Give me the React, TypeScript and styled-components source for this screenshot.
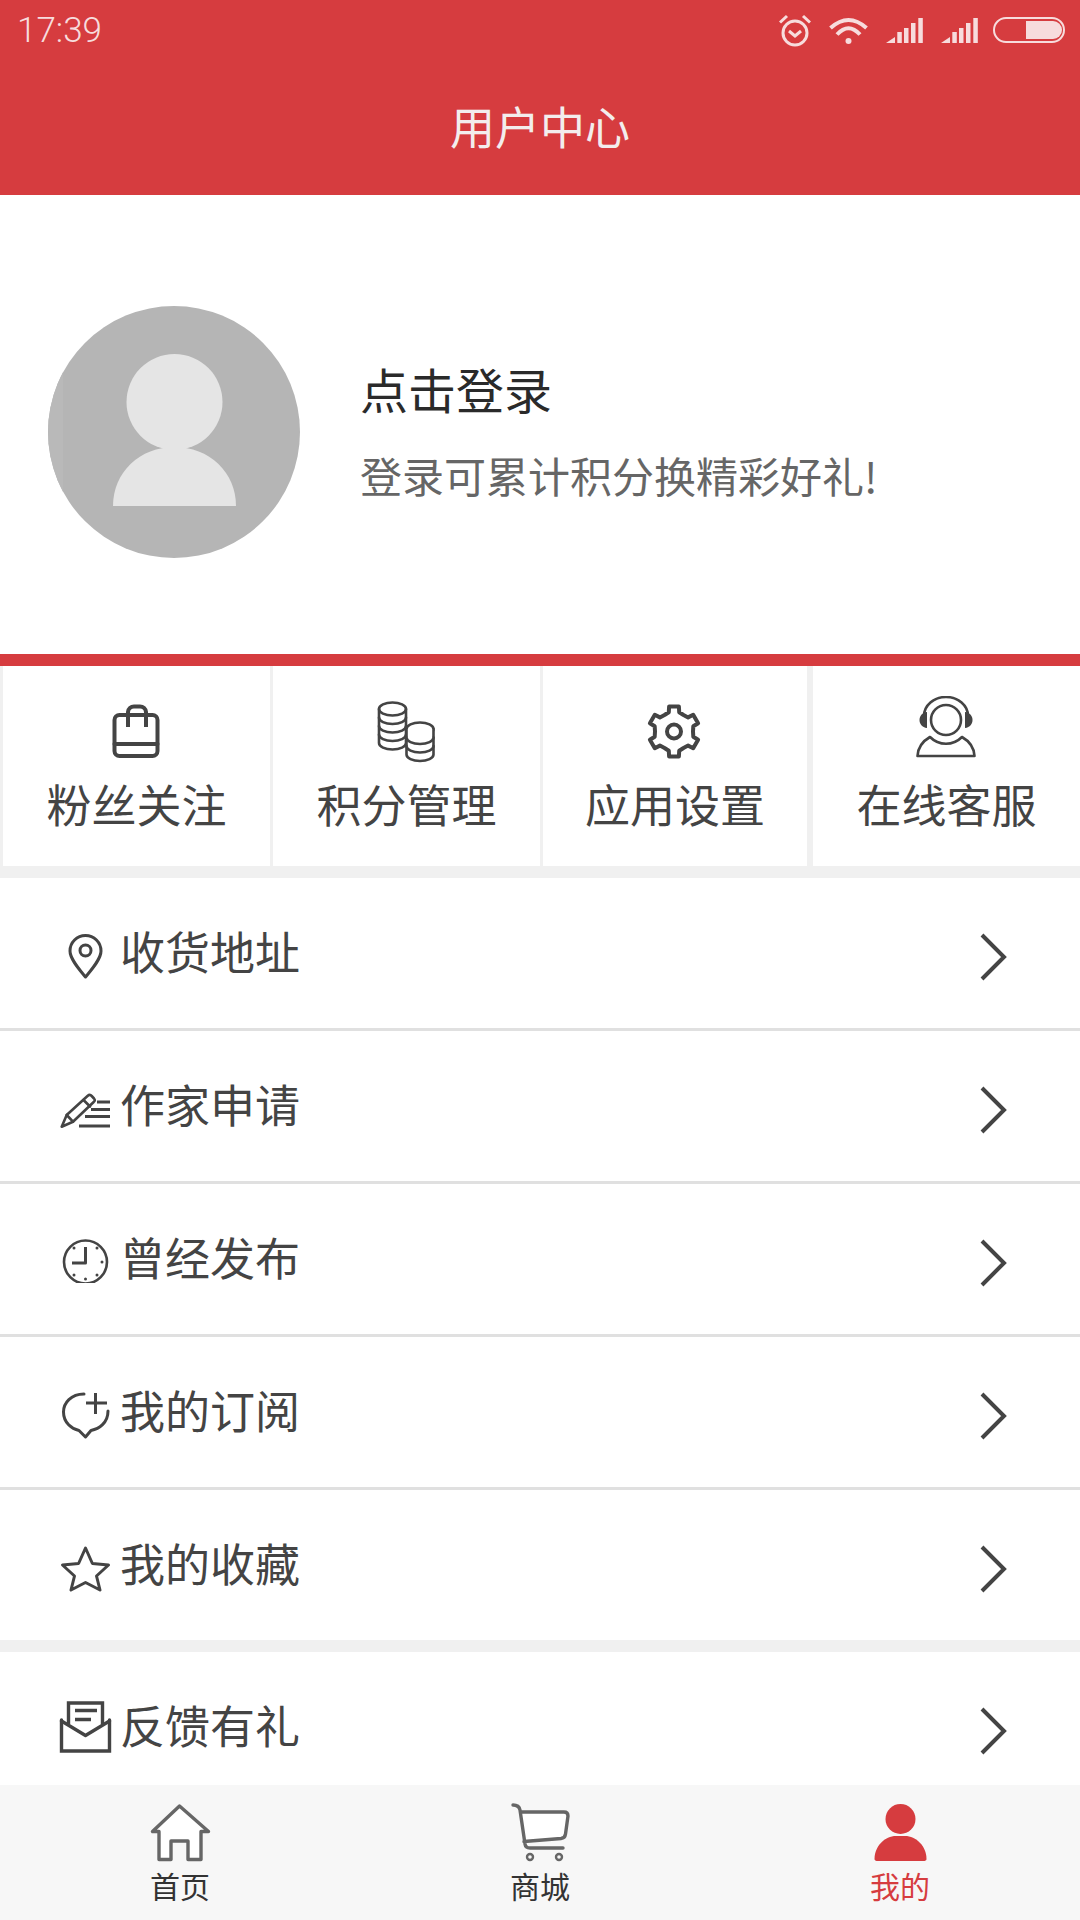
import React from "react";
import styled, { createGlobalStyle } from "styled-components";

const RED = "#d63c3f";
const INK = "#444444";
const STATUS = "#f7dcdd";

const GlobalStyle = createGlobalStyle`
  html, body {
    margin: 0;
    padding: 0;
    background: #fff;
    font-family: "Noto Sans CJK SC", "Noto Sans", sans-serif;
  }
`;

const Screen = styled.div`
  position: relative;
  width: 1080px;
  height: 1920px;
  overflow: hidden;
  background: #fff;
`;

const TopBar = styled.header`
  background: ${RED};
  height: 195px;
`;

const StatusBar = styled.div`
  display: flex;
  align-items: center;
  justify-content: space-between;
  height: 60px;
  padding: 0 15px 0 17px;
`;

const Clock = styled.span`
  font-family: Roboto, sans-serif;
  font-weight: 300;
  font-size: 35px;
  color: ${STATUS};
`;

const StatusIcons = styled.div`
  display: flex;
  align-items: center;
  gap: 18px;
`;

const Battery = styled.svg`
  width: 72px;
  height: 26px;
  margin-left: -3px;
`;

const Title = styled.h1`
  margin: 0;
  height: 135px;
  line-height: 131px;
  text-align: center;
  font-size: 45px;
  font-weight: 400;
  color: #f3eded;
`;

const Profile = styled.section`
  display: flex;
  align-items: center;
  gap: 60px;
  height: 459px;
  padding: 15px 0 0 48px;
  box-sizing: border-box;
`;

const Avatar = styled.svg`
  width: 252px;
  height: 252px;
  flex: none;
`;

const ProfileText = styled.div`
  display: flex;
  flex-direction: column;
  gap: 27px;
  margin-top: -1px;
`;

const LoginTitle = styled.div`
  font-size: 48px;
  line-height: 60px;
  color: #2a2a2a;
`;

const LoginHint = styled.div`
  font-size: 42px;
  line-height: 60px;
  color: #666;
`;

const RedRule = styled.div`
  height: 12px;
  background: ${RED};
`;

const Shortcuts = styled.nav`
  display: flex;
  padding: 0 0 12px 3px;
  background: #f0f0f0;
`;

const Shortcut = styled.div<{ $width: number; $gap: number }>`
  flex: none;
  display: flex;
  flex-direction: column;
  align-items: center;
  box-sizing: border-box;
  width: ${(p) => p.$width}px;
  height: 200px;
  margin-right: ${(p) => p.$gap}px;
  padding-top: 30px;
  background: #fff;
`;

const ShortcutIcon = styled.svg`
  width: 68px;
  height: 68px;
  flex: none;
`;

const ShortcutLabel = styled.div`
  margin-top: 10px;
  font-size: 45px;
  line-height: 60px;
  color: ${INK};
`;

const MenuGroup = styled.div`
  background: #fff;
`;

const SectionGap = styled.div`
  height: 12px;
  background: #f0f0f0;
`;

const Row = styled.div<{ $divider?: boolean }>`
  display: flex;
  align-items: center;
  height: 150px;
  padding: 0 72px 0 58px;
  border-bottom: ${(p) => (p.$divider ? "3px solid #e0e0e0" : "none")};
`;

const RowIcon = styled.svg`
  width: 60px;
  height: 60px;
  flex: none;
`;

const RowLabel = styled.span`
  flex: 1;
  margin: -5px 0 0 2px;
  font-size: 45px;
  line-height: 60px;
  color: ${INK};
`;

const Chevron = styled.svg`
  width: 30px;
  height: 50px;
  flex: none;
  margin-top: 7px;
`;

const TabBar = styled.footer`
  position: absolute;
  left: 0;
  right: 0;
  bottom: 0;
  display: grid;
  grid-template-columns: repeat(3, 1fr);
  height: 135px;
  background: #f7f7f7;
`;

const Tab = styled.div`
  display: flex;
  flex-direction: column;
  align-items: center;
  padding-top: 17px;
`;

const TabIcon = styled.svg`
  width: 68px;
  height: 60px;
  flex: none;
`;

const TabLabel = styled.span<{ $active?: boolean }>`
  margin-top: 1px;
  font-size: 30px;
  line-height: 44px;
  color: ${(p) => (p.$active ? RED : "#333")};
`;

const stroke = { fill: "none", stroke: INK, strokeLinecap: "round", strokeLinejoin: "round" } as const;

// six-toothed outline for the settings gear
const gearPoints = Array.from({ length: 6 }, (_, k) => {
  const a = (k * 60 - 90) * (Math.PI / 180);
  const pt = (r: number, d: number) => {
    const b = a + (d * Math.PI) / 180;
    return `${(34 + r * Math.cos(b)).toFixed(1)},${(35.5 + r * Math.sin(b)).toFixed(1)}`;
  };
  return [pt(19, -30), pt(20, -15), pt(25.5, -11), pt(25.5, 11), pt(20, 15)].join(" ");
}).join(" ");

const AlarmIcon = () => (
  <svg width="32" height="34" viewBox="0 0 32 34" fill="none" stroke={STATUS} strokeWidth="3">
    <circle cx="16" cy="20" r="12" />
    <path d="M1 9.5 L8 3 M31 9.5 L24 3" />
    <path d="M10 18 L16 23 L22 18" />
  </svg>
);

const WifiIcon = () => (
  <svg width="39" height="27" viewBox="0 0 39 27" fill="none" stroke={STATUS} strokeWidth="4">
    <path d="M1.5 11 Q19.5 -5 37.5 11" />
    <path d="M8 17.5 Q19.5 5 31 17.5" />
    <circle cx="19.5" cy="24" r="3" fill={STATUS} stroke="none" />
  </svg>
);

const SignalIcon = () => (
  <svg width="37" height="25" viewBox="0 0 37 25" fill={STATUS}>
    <polygon points="0,25 9,19 9,25" />
    <rect x="11.3" y="14" width="4.5" height="11" />
    <rect x="18" y="10" width="4.5" height="15" />
    <rect x="25" y="5" width="4.5" height="20" />
    <rect x="32.3" y="0" width="4.5" height="25" />
  </svg>
);

const BatteryIcon = () => (
  <Battery viewBox="0 0 72 26">
    <rect x="1" y="1" width="70" height="24" rx="12" fill="none" stroke={STATUS} strokeWidth="2" />
    <path d="M33 4 H60 A9 9 0 0 1 69 13 A9 9 0 0 1 60 22 H33 Z" fill={STATUS} />
  </Battery>
);

const BagGlyph = () => (
  <g {...stroke} strokeWidth="4">
    <rect x="12.5" y="19" width="43" height="41" rx="5" />
    <path d="M12.5 48 H55.5" />
    <path d="M26 31 V16 A6 6 0 0 1 32 10.5 H38 A6 6 0 0 1 44 16 V31" strokeLinecap="butt" />
  </g>
);

const coinStack = (cx: number, top: number, rows: number) => (
  <g>
    <ellipse cx={cx} cy={top} rx="13.5" ry="6.5" />
    <path d={`M${cx - 13.5} ${top} V${top + rows * 8.5} A13.5 6.5 0 0 0 ${cx + 13.5} ${top + rows * 8.5} V${top}`} />
    {Array.from({ length: rows - 1 }, (_, i) => (
      <path key={i} d={`M${cx - 13.5} ${top + (i + 1) * 8.5} A13.5 6.5 0 0 0 ${cx + 13.5} ${top + (i + 1) * 8.5}`} />
    ))}
  </g>
);

const CoinsGlyph = () => (
  <g {...stroke} strokeWidth="2.6">
    {coinStack(20.5, 13, 4)}
    <g fill="#fff">{coinStack(48, 33, 3)}</g>
  </g>
);

const GearGlyph = () => (
  <g {...stroke} strokeWidth="4">
    <polygon points={gearPoints} />
    <circle cx="34" cy="35.5" r="7" />
  </g>
);

const AgentGlyph = () => (
  <g>
    <g {...stroke} strokeWidth="2.6">
      <circle cx="34" cy="24" r="15" />
      <path d="M12 20 A22 19 0 0 1 56 20" />
      <path d="M5.5 60 H62.5 C62 51 57 45 50 41 C41 50 27 50 18 41 C11 45 6 51 5.5 60 Z" />
    </g>
    <path d="M15 16 C5 17 5 31 15 32 Z" fill={INK} />
    <path d="M53 16 C63 17 63 31 53 32 Z" fill={INK} />
  </g>
);

const PinGlyph = () => (
  <g {...stroke} strokeWidth="3">
    <path d="M27.5 54 C21 46 12 36 12 28 A15.5 15.5 0 0 1 43 28 C43 36 34 46 27.5 54 Z" />
    <circle cx="27.5" cy="27.5" r="5.5" />
  </g>
);

const PencilGlyph = () => (
  <g {...stroke} strokeWidth="2.6">
    <path d="M3.7 50.7 L8.7 39 L29.5 20 C31 18.7 32.5 18.7 33.7 20 L36 22.5 C37.2 24 37 25 35.7 26 L15 45.7 Z" />
    <path d="M8.7 39 L15 45.7 M25.5 24 L32 30.5" />
    <path d="M39 26 H52 M33 33.5 H52 M27 40.5 H52 M21 50 H52" strokeLinecap="butt" strokeWidth="3" />
  </g>
);

const ClockGlyph = () => (
  <g>
    <clipPath id="clock-cut">
      <rect x="0" y="0" width="60" height="54" />
    </clipPath>
    <g clipPath="url(#clock-cut)">
      <circle cx="27.5" cy="33" r="21.5" {...stroke} strokeWidth="2.6" />
      <path d="M27.5 18 V34 H14" {...stroke} strokeWidth="3" strokeLinecap="butt" />
      {[
        [16, 19], [39, 19], [44, 33], [39, 46], [27.5, 50], [16, 46],
      ].map(([x, y]) => (
        <circle key={`${x}-${y}`} cx={x} cy={y} r="1.5" fill={INK} />
      ))}
    </g>
  </g>
);

const BubbleGlyph = () => (
  <g {...stroke} strokeWidth="3">
    <path d="M26 12 C13 12 5.5 21 5.5 30 C5.5 41 14 47 21 48.5 L27.5 55 L33 48.5 C41 47 50 41 50 29" />
    <path d="M28 21 H49 M37.5 11 V32" strokeLinecap="butt" />
  </g>
);

const StarGlyph = () => (
  <polygon
    points="27.5,13 34.4,28.5 50.5,30 38.5,41 42,55 27.5,47.5 13,55 16.5,41 4.5,30 20.6,28.5"
    {...stroke}
    strokeWidth="3"
  />
);

const MailGlyph = () => (
  <g {...stroke} strokeWidth="3.4">
    <path d="M3.5 23 V54 H51.5 V23" strokeLinejoin="miter" />
    <path d="M3.5 24 L27.5 38.5 L51.5 24" />
    <path d="M10.5 27 V6 H44.5 V27" strokeLinecap="butt" strokeLinejoin="miter" />
    <path d="M17 13.5 H39 M17 22.5 H33" strokeLinecap="butt" />
  </g>
);

const shortcuts = [
  { label: "粉丝关注", glyph: <BagGlyph />, width: 267, gap: 3 },
  { label: "积分管理", glyph: <CoinsGlyph />, width: 267, gap: 3 },
  { label: "应用设置", glyph: <GearGlyph />, width: 264, gap: 6 },
  { label: "在线客服", glyph: <AgentGlyph />, width: 267, gap: 0 },
];

const mainRows = [
  { label: "收货地址", glyph: <PinGlyph /> },
  { label: "作家申请", glyph: <PencilGlyph /> },
  { label: "曾经发布", glyph: <ClockGlyph /> },
  { label: "我的订阅", glyph: <BubbleGlyph /> },
  { label: "我的收藏", glyph: <StarGlyph /> },
];

const MenuRow: React.FC<{ label: string; glyph: React.ReactNode; divider?: boolean }> = ({
  label,
  glyph,
  divider,
}) => (
  <Row $divider={divider}>
    <RowIcon viewBox="0 0 60 60">{glyph}</RowIcon>
    <RowLabel>{label}</RowLabel>
    <Chevron viewBox="0 0 30 50">
      <path d="M4 3 L26 25 L4 47" {...stroke} strokeWidth="4" strokeLinecap="butt" strokeLinejoin="miter" />
    </Chevron>
  </Row>
);

const App: React.FC = () => (
  <Screen>
    <GlobalStyle />
    <TopBar>
      <StatusBar>
        <Clock>17:39</Clock>
        <StatusIcons>
          <AlarmIcon />
          <WifiIcon />
          <SignalIcon />
          <SignalIcon />
          <BatteryIcon />
        </StatusIcons>
      </StatusBar>
      <Title>用户中心</Title>
    </TopBar>

    <Profile>
      <Avatar viewBox="0 0 252 252">
        <clipPath id="avatar-strip">
          <rect x="0" y="0" width="15" height="252" />
        </clipPath>
        <circle cx="126" cy="126" r="126" fill="#b5b5b5" />
        <circle cx="126" cy="126" r="126" fill="#b9b9b9" clipPath="url(#avatar-strip)" />
        <circle cx="126.5" cy="96" r="48" fill="#e5e5e5" />
        <path d="M65 200 C65 166 92 141 126.5 141 C161 141 188 166 188 200 Z" fill="#e5e5e5" />
      </Avatar>
      <ProfileText>
        <LoginTitle>点击登录</LoginTitle>
        <LoginHint>登录可累计积分换精彩好礼!</LoginHint>
      </ProfileText>
    </Profile>
    <RedRule />

    <Shortcuts>
      {shortcuts.map((s) => (
        <Shortcut key={s.label} $width={s.width} $gap={s.gap}>
          <ShortcutIcon viewBox="1 0 68 68">{s.glyph}</ShortcutIcon>
          <ShortcutLabel>{s.label}</ShortcutLabel>
        </Shortcut>
      ))}
    </Shortcuts>

    <MenuGroup>
      {mainRows.map((r, i) => (
        <MenuRow key={r.label} label={r.label} glyph={r.glyph} divider={i < mainRows.length - 1} />
      ))}
    </MenuGroup>
    <SectionGap />
    <MenuGroup>
      <MenuRow label="反馈有礼" glyph={<MailGlyph />} />
    </MenuGroup>

    <TabBar>
      <Tab>
        <TabIcon viewBox="0 0 68 60">
          <path
            d="M33.5 4 L6.5 29.5 H13 V57.5 H25 V39 H42 V57.5 H55 V29.5 H62.5 Z"
            fill="#fff"
            stroke="#666"
            strokeWidth="3.4"
            strokeLinejoin="round"
          />
        </TabIcon>
        <TabLabel>首页</TabLabel>
      </Tab>
      <Tab>
        <TabIcon viewBox="0 0 68 60">
          <path d="M15 10 H58 Q62 10 62 14 L59 32 Q58.5 36 55 36.5 L18 40 Z" fill="#fff" />
          <path
            d="M7 3 Q13 3 14 8 L19 42 Q19.5 46 24 46 H57 M15 10 H58 Q62 10 62 14 L59.5 32 Q59 36 55 36.5 L18 39.5"
            fill="none"
            stroke="#666"
            strokeWidth="3.4"
            strokeLinecap="round"
          />
          <circle cx="24" cy="55" r="3" fill="none" stroke="#666" strokeWidth="2.4" />
          <circle cx="53" cy="55" r="3" fill="none" stroke="#666" strokeWidth="2.4" />
        </TabIcon>
        <TabLabel>商城</TabLabel>
      </Tab>
      <Tab>
        <TabIcon viewBox="0 0 68 60">
          <circle cx="34.5" cy="17" r="15" fill={RED} />
          <path d="M8.5 57 C8.5 44 19 34 30 34 H39 C50 34 60.5 44 60.5 57 Q60.5 59 57 59 H12 Q8.5 59 8.5 57 Z" fill={RED} />
        </TabIcon>
        <TabLabel $active>我的</TabLabel>
      </Tab>
    </TabBar>
  </Screen>
);

export default App;
